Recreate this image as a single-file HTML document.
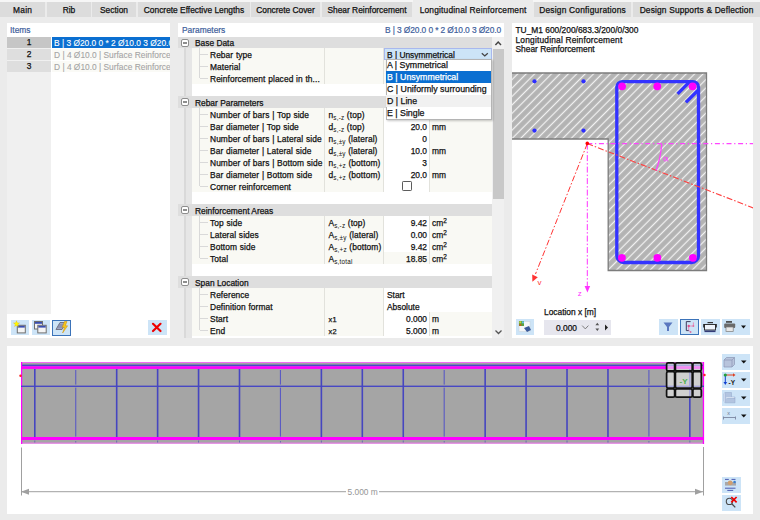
<!DOCTYPE html>
<html><head><meta charset="utf-8">
<style>
*{box-sizing:border-box;margin:0;padding:0}
html,body{width:760px;height:520px;overflow:hidden;background:#ebebeb;font-family:"Liberation Sans",sans-serif;font-size:8.4px;color:#111;-webkit-text-stroke:0.25px currentColor}
div{position:absolute;white-space:nowrap}
.tab{top:2px;height:15px;background:#dcdcdc;text-align:center;line-height:16px;color:#111;-webkit-text-stroke:0.25px currentColor}
.tab.act{top:0;height:18px;background:#ebebeb;line-height:20px}
.pn{background:#fff}
.ttl{color:#40609c;-webkit-text-stroke:0.2px currentColor}
.r{height:12px;line-height:15px}
.hd{background:#dedede}
.bg{background:#f9f9f4}
.wt{background:#fff}
.vl{background:#e2e2dc;width:1px}
sub{font-size:6.3px;vertical-align:0;position:relative;top:1.5px;letter-spacing:0.25px;-webkit-text-stroke:0px}
sup{font-size:6.4px;vertical-align:0;position:relative;top:-3px}
.btn{background:#cde4f7}
</style></head><body>

<div style="left:0;top:0;width:760px;height:2px;background:#f6f6f6"></div>
<div class="tab" style="left:0px;width:45px;letter-spacing:0.2px;text-indent:0.2px">Main</div>
<div class="tab" style="left:47px;width:44px;letter-spacing:0px;text-indent:0px">Rib</div>
<div class="tab" style="left:92px;width:44px;letter-spacing:0px;text-indent:0px">Section</div>
<div class="tab" style="left:138px;width:112px;letter-spacing:0px;text-indent:0px">Concrete Effective Lengths</div>
<div class="tab" style="left:251px;width:69px;letter-spacing:0px;text-indent:0px">Concrete Cover</div>
<div class="tab" style="left:322px;width:90px;letter-spacing:0px;text-indent:0px">Shear Reinforcement</div>
<div class="tab act" style="left:413px;width:120px;letter-spacing:0.19px;text-indent:0.19px">Longitudinal Reinforcement</div>
<div class="tab" style="left:534px;width:97px;letter-spacing:0.21px;text-indent:0.21px">Design Configurations</div>
<div class="tab" style="left:633px;width:127px;letter-spacing:0.16px;text-indent:0.16px">Design Supports &amp; Deflection</div>
<div class="pn" style="left:7px;top:23px;width:163px;height:315px"></div>
<div class="ttl" style="left:10px;top:23px;height:14px;line-height:15px">Items</div>
<div style="left:7px;top:37px;width:44px;height:277px;background:#f0f0f0"></div>
<div class="r" style="left:7px;top:37px;width:44px;height:11px;background:#c6c6c6;text-align:center;line-height:11px">1</div>
<div class="r" style="left:7px;top:49px;width:44px;height:11px;background:#dedede;text-align:center;line-height:11px">2</div>
<div class="r" style="left:7px;top:61px;width:44px;height:11px;background:#dedede;text-align:center;line-height:11px">3</div>
<div class="r" style="left:52px;top:37px;width:118px;height:11px;line-height:12px;background:#0b6fd1;color:#fff;padding-left:2px;overflow:hidden;-webkit-text-stroke:0.1px currentColor">B | 3 Ø20.0 0 * 2 Ø10.0 3 Ø20.0</div>
<div class="r" style="left:52px;top:49px;width:118px;height:11px;line-height:12px;background:#fafaf6;color:#a4a4a4;padding-left:2px;overflow:hidden;-webkit-text-stroke:0.1px currentColor">D | 4 Ø10.0 | Surface Reinforcement</div>
<div class="r" style="left:52px;top:61px;width:118px;height:11px;line-height:12px;background:#fafaf6;color:#a4a4a4;padding-left:2px;overflow:hidden;-webkit-text-stroke:0.1px currentColor">D | 4 Ø10.0 | Surface Reinforcement</div>
<div class="btn" style="left:10.5px;top:320px;width:18.5px;height:15px"></div>
<div class="btn" style="left:31.5px;top:320px;width:18.5px;height:15px"></div>
<div class="btn" style="left:52px;top:320px;width:19px;height:15.5px;border:1.3px solid #3b73b9"></div>
<div class="btn" style="left:148px;top:320px;width:18.5px;height:15px"></div>
<svg style="position:absolute;left:0;top:300px" width="180" height="40" viewBox="0 300 180 40"><rect x="17.3" y="325.3" width="8" height="7.6" fill="#f4f4f4" stroke="#6e6e6e" stroke-width="1"/><rect x="17.8" y="325.8" width="7" height="1.8" fill="#3a4fb0"/><path d="M16.5 320.8 L17.2 323 L19.5 323 L17.7 324.3 L18.4 326.5 L16.5 325.2 L14.6 326.5 L15.3 324.3 L13.5 323 L15.8 323 Z" fill="#f6e81a" stroke="#e0c000" stroke-width="0.4"/><circle cx="16.5" cy="323.8" r="1.6" fill="#fff700"/><rect x="34.5" y="321.5" width="8" height="7.5" fill="#f4f4f4" stroke="#6e6e6e" stroke-width="1"/><rect x="35" y="322" width="7" height="1.8" fill="#3a4fb0"/><rect x="37.8" y="325.3" width="8.4" height="7.6" fill="#f4f4f4" stroke="#6e6e6e" stroke-width="1"/><rect x="38.3" y="325.8" width="7.4" height="1.8" fill="#3a4fb0"/><path d="M56 329.5 L60 322.5 L66 322.5 L62 329.5 Z" fill="#9da6c4" stroke="#6c6c7c" stroke-width="0.9"/><path d="M57.5 327 L63.5 327 M58.8 325 L64.8 325" stroke="#6c6c8c" stroke-width="0.6"/><path d="M64.5 321.5 L62.3 327.2 L64.6 327.2 L62.6 333 L67.6 325.8 L65.3 325.8 L67 321.5 Z" fill="#f7c81e" stroke="#d09000" stroke-width="0.5"/><path d="M153 323.8 L160.5 331 M160.5 323.8 L153 331" stroke="#ee0000" stroke-width="2.2" stroke-linecap="round"/></svg>
<div class="pn" style="left:178px;top:23px;width:326px;height:315px"></div>
<div class="ttl" style="left:182px;top:23px;height:14px;line-height:15px">Parameters</div>
<div class="ttl" style="left:300px;width:201px;text-align:right;letter-spacing:-0.1px;top:23px;height:14px;line-height:15px">B | 3 Ø20.0 0 * 2 Ø10.0 3 Ø20.0</div>
<div style="left:178px;top:37px;width:14px;height:301px;background:#e6e6e6"></div>
<div style="left:178px;top:37px;width:6px;height:301px;background:#ebebeb"></div>
<div style="left:184px;top:37px;width:2px;height:301px;background:#d9d9d9"></div>
<div class="hd" style="left:178px;top:37px;width:314px;height:11px"></div>
<div style="left:181px;top:39px;width:8px;height:8px;border:1px solid #8e8e8e;border-radius:2px;background:#fff"></div>
<div style="left:183px;top:42px;width:4px;height:2px;background:#8e8e8e"></div>
<div class="r" style="left:195px;top:37px;height:11px;line-height:13px">Base Data</div>
<div class="bg" style="left:192px;top:48px;width:300px;height:36px"></div>
<div style="left:199px;top:48px;width:1px;height:30px;background:#d9d9d9"></div>
<div style="left:200px;top:54px;width:8px;height:1px;background:#d9d9d9"></div>
<div class="r" style="left:210px;top:48px;letter-spacing:0.08px;word-spacing:0.3px">Rebar type</div>
<div style="left:200px;top:66px;width:8px;height:1px;background:#d9d9d9"></div>
<div class="r" style="left:210px;top:60px;letter-spacing:0.08px;word-spacing:0.3px">Material</div>
<div style="left:200px;top:78px;width:8px;height:1px;background:#d9d9d9"></div>
<div class="r" style="left:210px;top:72px;letter-spacing:0.08px;word-spacing:0.3px">Reinforcement placed in th...</div>
<div class="vl" style="left:324px;top:48px;height:36px"></div>
<div class="vl" style="left:383px;top:48px;height:36px"></div>
<div class="vl" style="left:429px;top:48px;height:12px"></div>
<div class="vl" style="left:429px;top:60px;height:12px"></div>
<div class="vl" style="left:429px;top:72px;height:12px"></div>
<div class="hd" style="left:178px;top:96px;width:314px;height:12px"></div>
<div style="left:181px;top:98px;width:8px;height:8px;border:1px solid #8e8e8e;border-radius:2px;background:#fff"></div>
<div style="left:183px;top:101px;width:4px;height:2px;background:#8e8e8e"></div>
<div class="r" style="left:195px;top:96px;height:12px;line-height:14px">Rebar Parameters</div>
<div class="bg" style="left:192px;top:108px;width:300px;height:84px"></div>
<div style="left:199px;top:108px;width:1px;height:78px;background:#d9d9d9"></div>
<div style="left:200px;top:114px;width:8px;height:1px;background:#d9d9d9"></div>
<div class="r" style="left:210px;top:108px;letter-spacing:0.08px;word-spacing:0.3px">Number of bars | Top side</div>
<div class="wt" style="left:384px;top:108px;width:45px;height:12px"></div>
<div class="r" style="left:328.5px;top:108px;letter-spacing:0.1px">n<sub>s,-z</sub> (top)</div>
<div style="left:200px;top:126px;width:8px;height:1px;background:#d9d9d9"></div>
<div class="r" style="left:210px;top:120px;letter-spacing:0.08px;word-spacing:0.3px">Bar diameter | Top side</div>
<div class="wt" style="left:384px;top:120px;width:45px;height:12px"></div>
<div class="r" style="left:328.5px;top:120px;letter-spacing:0.1px">d<sub>s,-z</sub> (top)</div>
<div class="r" style="left:384px;width:43px;text-align:right;top:120px">20.0</div>
<div class="r" style="left:432px;top:120px">mm</div>
<div style="left:200px;top:138px;width:8px;height:1px;background:#d9d9d9"></div>
<div class="r" style="left:210px;top:132px;letter-spacing:0.08px;word-spacing:0.3px">Number of bars | Lateral side</div>
<div class="wt" style="left:384px;top:132px;width:45px;height:12px"></div>
<div class="r" style="left:328.5px;top:132px;letter-spacing:0.1px">n<sub>s,±y</sub> (lateral)</div>
<div class="r" style="left:384px;width:43px;text-align:right;top:132px">0</div>
<div style="left:200px;top:150px;width:8px;height:1px;background:#d9d9d9"></div>
<div class="r" style="left:210px;top:144px;letter-spacing:0.08px;word-spacing:0.3px">Bar diameter | Lateral side</div>
<div class="wt" style="left:384px;top:144px;width:45px;height:12px"></div>
<div class="r" style="left:328.5px;top:144px;letter-spacing:0.1px">d<sub>s,±y</sub> (lateral)</div>
<div class="r" style="left:384px;width:43px;text-align:right;top:144px">10.0</div>
<div class="r" style="left:432px;top:144px">mm</div>
<div style="left:200px;top:162px;width:8px;height:1px;background:#d9d9d9"></div>
<div class="r" style="left:210px;top:156px;letter-spacing:0.08px;word-spacing:0.3px">Number of bars | Bottom side</div>
<div class="wt" style="left:384px;top:156px;width:45px;height:12px"></div>
<div class="r" style="left:328.5px;top:156px;letter-spacing:0.1px">n<sub>s,+z</sub> (bottom)</div>
<div class="r" style="left:384px;width:43px;text-align:right;top:156px">3</div>
<div style="left:200px;top:174px;width:8px;height:1px;background:#d9d9d9"></div>
<div class="r" style="left:210px;top:168px;letter-spacing:0.08px;word-spacing:0.3px">Bar diameter | Bottom side</div>
<div class="wt" style="left:384px;top:168px;width:45px;height:12px"></div>
<div class="r" style="left:328.5px;top:168px;letter-spacing:0.1px">d<sub>s,+z</sub> (bottom)</div>
<div class="r" style="left:384px;width:43px;text-align:right;top:168px">20.0</div>
<div class="r" style="left:432px;top:168px">mm</div>
<div style="left:200px;top:186px;width:8px;height:1px;background:#d9d9d9"></div>
<div class="r" style="left:210px;top:180px;letter-spacing:0.08px;word-spacing:0.3px">Corner reinforcement</div>
<div class="wt" style="left:384px;top:180px;width:45px;height:12px"></div>
<div style="left:402px;top:181px;width:10px;height:10px;border:1px solid #5c5c5c;border-radius:1.2px;background:#fff"></div>
<div class="vl" style="left:324px;top:108px;height:84px"></div>
<div class="vl" style="left:383px;top:108px;height:84px"></div>
<div class="vl" style="left:429px;top:108px;height:12px"></div>
<div class="vl" style="left:429px;top:120px;height:12px"></div>
<div class="vl" style="left:429px;top:132px;height:12px"></div>
<div class="vl" style="left:429px;top:144px;height:12px"></div>
<div class="vl" style="left:429px;top:156px;height:12px"></div>
<div class="vl" style="left:429px;top:168px;height:12px"></div>
<div class="vl" style="left:429px;top:180px;height:12px"></div>
<div class="hd" style="left:178px;top:204px;width:314px;height:12px"></div>
<div style="left:181px;top:206px;width:8px;height:8px;border:1px solid #8e8e8e;border-radius:2px;background:#fff"></div>
<div style="left:183px;top:209px;width:4px;height:2px;background:#8e8e8e"></div>
<div class="r" style="left:195px;top:204px;height:12px;line-height:14px">Reinforcement Areas</div>
<div class="bg" style="left:192px;top:216px;width:300px;height:48px"></div>
<div style="left:199px;top:216px;width:1px;height:42px;background:#d9d9d9"></div>
<div style="left:200px;top:222px;width:8px;height:1px;background:#d9d9d9"></div>
<div class="r" style="left:210px;top:216px;letter-spacing:0.08px;word-spacing:0.3px">Top side</div>
<div class="wt" style="left:384px;top:216px;width:45px;height:12px"></div>
<div class="r" style="left:328.5px;top:216px;letter-spacing:0.1px">A<sub>s,-z</sub> (top)</div>
<div class="r" style="left:384px;width:43px;text-align:right;top:216px">9.42</div>
<div class="r" style="left:432px;top:216px">cm<sup>2</sup></div>
<div style="left:200px;top:234px;width:8px;height:1px;background:#d9d9d9"></div>
<div class="r" style="left:210px;top:228px;letter-spacing:0.08px;word-spacing:0.3px">Lateral sides</div>
<div class="wt" style="left:384px;top:228px;width:45px;height:12px"></div>
<div class="r" style="left:328.5px;top:228px;letter-spacing:0.1px">A<sub>s,±y</sub> (lateral)</div>
<div class="r" style="left:384px;width:43px;text-align:right;top:228px">0.00</div>
<div class="r" style="left:432px;top:228px">cm<sup>2</sup></div>
<div style="left:200px;top:246px;width:8px;height:1px;background:#d9d9d9"></div>
<div class="r" style="left:210px;top:240px;letter-spacing:0.08px;word-spacing:0.3px">Bottom side</div>
<div class="wt" style="left:384px;top:240px;width:45px;height:12px"></div>
<div class="r" style="left:328.5px;top:240px;letter-spacing:0.1px">A<sub>s,+z</sub> (bottom)</div>
<div class="r" style="left:384px;width:43px;text-align:right;top:240px">9.42</div>
<div class="r" style="left:432px;top:240px">cm<sup>2</sup></div>
<div style="left:200px;top:258px;width:8px;height:1px;background:#d9d9d9"></div>
<div class="r" style="left:210px;top:252px;letter-spacing:0.08px;word-spacing:0.3px">Total</div>
<div class="r" style="left:328.5px;top:252px;letter-spacing:0.1px">A<sub>s,total</sub></div>
<div class="r" style="left:384px;width:43px;text-align:right;top:252px">18.85</div>
<div class="r" style="left:432px;top:252px">cm<sup>2</sup></div>
<div class="vl" style="left:324px;top:216px;height:48px"></div>
<div class="vl" style="left:383px;top:216px;height:48px"></div>
<div class="vl" style="left:429px;top:216px;height:12px"></div>
<div class="vl" style="left:429px;top:228px;height:12px"></div>
<div class="vl" style="left:429px;top:240px;height:12px"></div>
<div class="vl" style="left:429px;top:252px;height:12px"></div>
<div class="hd" style="left:178px;top:276px;width:314px;height:12px"></div>
<div style="left:181px;top:278px;width:8px;height:8px;border:1px solid #8e8e8e;border-radius:2px;background:#fff"></div>
<div style="left:183px;top:281px;width:4px;height:2px;background:#8e8e8e"></div>
<div class="r" style="left:195px;top:276px;height:12px;line-height:14px">Span Location</div>
<div class="bg" style="left:192px;top:288px;width:300px;height:48px"></div>
<div style="left:199px;top:288px;width:1px;height:42px;background:#d9d9d9"></div>
<div style="left:200px;top:294px;width:8px;height:1px;background:#d9d9d9"></div>
<div class="r" style="left:210px;top:288px;letter-spacing:0.08px;word-spacing:0.3px">Reference</div>
<div class="wt" style="left:384px;top:288px;width:108px;height:12px"></div>
<div class="r" style="left:387px;top:288px">Start</div>
<div style="left:200px;top:306px;width:8px;height:1px;background:#d9d9d9"></div>
<div class="r" style="left:210px;top:300px;letter-spacing:0.08px;word-spacing:0.3px">Definition format</div>
<div class="wt" style="left:384px;top:300px;width:108px;height:12px"></div>
<div class="r" style="left:387px;top:300px">Absolute</div>
<div style="left:200px;top:318px;width:8px;height:1px;background:#d9d9d9"></div>
<div class="r" style="left:210px;top:312px;letter-spacing:0.08px;word-spacing:0.3px">Start</div>
<div class="wt" style="left:384px;top:312px;width:45px;height:12px"></div>
<div class="r" style="left:328.5px;top:312px;letter-spacing:0.1px"><span style="font-size:7.4px;letter-spacing:0.3px">x1</span></div>
<div class="r" style="left:384px;width:43px;text-align:right;top:312px">0.000</div>
<div class="r" style="left:432px;top:312px">m</div>
<div style="left:200px;top:330px;width:8px;height:1px;background:#d9d9d9"></div>
<div class="r" style="left:210px;top:324px;letter-spacing:0.08px;word-spacing:0.3px">End</div>
<div class="wt" style="left:384px;top:324px;width:45px;height:12px"></div>
<div class="r" style="left:328.5px;top:324px;letter-spacing:0.1px"><span style="font-size:7.4px;letter-spacing:0.3px">x2</span></div>
<div class="r" style="left:384px;width:43px;text-align:right;top:324px">5.000</div>
<div class="r" style="left:432px;top:324px">m</div>
<div class="vl" style="left:324px;top:288px;height:48px"></div>
<div class="vl" style="left:383px;top:288px;height:48px"></div>
<div class="vl" style="left:429px;top:312px;height:12px"></div>
<div class="vl" style="left:429px;top:324px;height:12px"></div>
<div style="left:492.4px;top:37px;width:11.6px;height:301px;background:#f0f0f0"></div>
<div style="left:492.8px;top:49.3px;width:10.8px;height:149.5px;background:#c8c8c8"></div>
<svg style="position:absolute;left:493px;top:38px" width="11" height="10"><path d="M2.4 7 L5.2 4.1 L8 7" fill="none" stroke="#444" stroke-width="1.5"/></svg>
<svg style="position:absolute;left:493px;top:327px" width="11" height="10"><path d="M2.5 3.5 L5.5 6.5 L8.5 3.5" fill="none" stroke="#555" stroke-width="1.3"/></svg>
<div style="left:384px;top:48px;width:108px;height:12px;background:#cce4f7;border:1px solid #a8b8ee"></div>
<div class="r" style="left:387px;top:48px">B | Unsymmetrical</div>
<svg style="position:absolute;left:480px;top:50px" width="10" height="8"><path d="M1.8 3.2 L4.8 5.9 L7.8 3.2" fill="none" stroke="#444" stroke-width="1.3"/></svg>
<div style="left:385.5px;top:59px;width:106px;height:61px;background:#fff;border:1px solid #b4b4b4;box-shadow:1px 1px 2px rgba(0,0,0,0.22)"></div>
<div class="r" style="left:387px;top:59.3px;font-size:8.8px;line-height:13.5px">A | Symmetrical</div>
<div style="left:386px;top:71.3px;width:105px;height:12px;background:#0b6fd1"></div>
<div class="r" style="left:387px;top:71.3px;color:#fff;font-size:8.8px;line-height:13.5px">B | Unsymmetrical</div>
<div class="r" style="left:387px;top:83.3px;font-size:8.8px;line-height:13.5px">C | Uniformly surrounding</div>
<div style="left:386px;top:95.3px;width:105px;height:12px;background:#f1f1f1"></div>
<div class="r" style="left:387px;top:95.3px;font-size:8.8px;line-height:13.5px">D | Line</div>
<div class="r" style="left:387px;top:107.3px;font-size:8.8px;line-height:13.5px">E | Single</div>
<div class="pn" style="left:512px;top:23px;width:241px;height:315px"></div>
<div style="left:515.5px;top:25.8px;line-height:9.8px">TU_M1 600/200/683.3/200/0/300</div>
<div style="left:515.5px;top:35.6px;line-height:9.8px;letter-spacing:0.19px">Longitudinal Reinforcement</div>
<div style="left:515.5px;top:45.4px;line-height:9.8px">Shear Reinforcement</div>
<svg style="position:absolute;left:512px;top:23px" width="241" height="315" viewBox="512 23 241 315"><defs><pattern id="h" patternUnits="userSpaceOnUse" width="5.9556" height="20" patternTransform="rotate(45)"><rect x="0" y="0" width="5.9556" height="20" fill="#b3b3b3"/><rect x="0.845" y="0" width="1.25" height="20" fill="#f2f2f2"/></pattern></defs><path d="M500 73 H706.5 V270.5 H608.2 V139 H500 Z" fill="url(#h)" stroke="#7c7c7c" stroke-width="1.3"/><circle cx="534.5" cy="81.3" r="2.1" fill="#2d2dff"/><circle cx="583.5" cy="81.3" r="2.1" fill="#2d2dff"/><circle cx="534.5" cy="130.6" r="2.1" fill="#2d2dff"/><circle cx="583.5" cy="130.6" r="2.1" fill="#2d2dff"/><path d="M616.8 87.3 A5.7 5.7 0 0 1 622.5 81.6 H692.8 A5.7 5.7 0 0 1 698.5 87.3 V255.5 A7 7 0 0 1 691.5 262.5 H623.8 A7 7 0 0 1 616.8 255.5 Z" fill="none" stroke="#3333ff" stroke-width="3.3"/><path d="M677.6 93.8 L689.5 81.9 M685.9 102.4 L697.8 90.5" stroke="#3333ff" stroke-width="3.3" fill="none"/><circle cx="622.1" cy="86.3" r="3.9" fill="#ff00ff"/><circle cx="657.3" cy="86.3" r="3.9" fill="#ff00ff"/><circle cx="692.6" cy="86.3" r="3.9" fill="#ff00ff"/><circle cx="621.9" cy="257.8" r="3.9" fill="#ff00ff"/><circle cx="657.4" cy="257.8" r="3.9" fill="#ff00ff"/><circle cx="692.9" cy="257.8" r="3.9" fill="#ff00ff"/><path d="M587.3 143.6 H753" stroke="#ff44ff" stroke-width="1.1" stroke-dasharray="5 2.7 1.2 2.7" fill="none"/><path d="M587.3 143.6 V287" stroke="#ff33ff" stroke-width="1" stroke-dasharray="6 2 1.5 2" fill="none"/><path d="M584.6 286 L590.2 286 L587.4 292.5 Z" fill="#ff33ff"/><path d="M587.3 143.6 L753.5 208" stroke="#ff4040" stroke-width="1.1" stroke-dasharray="6 2 1.5 2" fill="none"/><path d="M587.3 143.6 L535.5 274" stroke="#ff3333" stroke-width="1" stroke-dasharray="6 2 1.5 2" fill="none"/><path d="M532.2 274.6 L537.8 277.2 L532.4 281.8 Z" fill="#ff3333"/><circle cx="587.3" cy="143.4" r="1.8" fill="#ff0000"/><path d="M661.8 144 Q660.5 158 656.1 170.5" stroke="#ff44ff" stroke-width="1.3" fill="none"/><path d="M667.4 157 Q666.8 161.3 665.1 161.2 Q663.5 161 663.6 159.1 Q663.8 157 665.3 157 Q666.8 157.1 667.1 159.6 Q667.3 161.1 668.3 161.4" fill="none" stroke="#ff44ff" stroke-width="0.9"/><text x="537.6" y="284.8" font-size="8" fill="#ff3333" font-family="Liberation Sans">v</text><text x="577.8" y="295.5" font-size="8" fill="#ff33ff" font-family="Liberation Sans">z</text></svg>
<div class="r" style="left:544px;top:305.5px;line-height:13px">Location x [m]</div>
<div style="left:544px;top:320px;width:67px;height:15px;background:#e6e6ee"></div>
<div class="r" style="left:556px;top:321px;line-height:14px">0.000</div>
<svg style="position:absolute;left:544px;top:320px" width="67" height="15"><path d="M38.2 5.6 L41.3 8.9 L44.4 5.6" fill="none" stroke="#707070" stroke-width="0.9"/><path d="M51.4 5.2 L53.3 2.7 L55.2 5.2 Z M51.4 8.6 L55.2 8.6 L53.3 11.1 Z" fill="#555"/><path d="M61 4.5 L64 7.5 L61 10.5 Z" fill="#222"/></svg>
<div class="btn" style="left:516px;top:319px;width:18px;height:15.5px"></div>
<div class="btn" style="left:659px;top:319px;width:19px;height:16px"></div>
<div class="btn" style="left:680px;top:319px;width:19px;height:16px;border:1.3px solid #3b73b9"></div>
<div class="btn" style="left:701px;top:319px;width:19px;height:16px"></div>
<div class="btn" style="left:722px;top:319px;width:28px;height:16px"></div>
<svg style="position:absolute;left:500px;top:300px" width="260" height="40" viewBox="500 300 260 40"><rect x="519" y="321.5" width="11" height="10" fill="#f4f6f8" stroke="#c8d0d8" stroke-width="0.5"/><rect x="519" y="321" width="5" height="5" fill="#5aa040"/><rect x="519.3" y="321.3" width="2" height="2" fill="#c8d040"/><rect x="522" y="321.3" width="2" height="2" fill="#60c0e0"/><rect x="519.3" y="324" width="2" height="2" fill="#c06020"/><path d="M524 328 L529 326 L531 330 L527 332 Z" fill="#3a5a9a"/><path d="M663.5 322.5 L672.5 322.5 L669 327 L669 331 L667 331 L667 327 Z" fill="#5a78c0"/><path d="M690.6 321.6 H686.3 V330.6 H689" fill="none" stroke="#3c3c5c" stroke-width="1"/><path d="M688.7 326 H693.4 V322.4 M688.7 326 V330.4 L690.6 332" fill="none" stroke="#e87ab0" stroke-width="0.8"/><circle cx="688.7" cy="326" r="1.2" fill="#e0508a"/><circle cx="693.4" cy="326" r="0.9" fill="#e070a0"/><circle cx="690.6" cy="332" r="0.9" fill="#e070a0"/><rect x="704.5" y="324.5" width="11" height="5.5" fill="#eef4fb" stroke="#222" stroke-width="0.9"/><rect x="704.5" y="330.5" width="11" height="1.6" fill="#343c78"/><path d="M707.5 322.6 H713" stroke="#333" stroke-width="1.2"/><path d="M703.8 324 V327.5 M716.2 324 V327.5" stroke="#222" stroke-width="1.2"/><rect x="726" y="321" width="6" height="1.8" fill="#505050"/><rect x="724.2" y="323.5" width="11" height="4.6" rx="1" fill="#6a6a6a"/><rect x="726" y="327" width="7.2" height="4.6" fill="#e8e8e8" stroke="#7a7a7a" stroke-width="0.7"/><path d="M741 325.6 L746 325.6 L743.5 328.6 Z" fill="#111"/></svg>
<div class="pn" style="left:7px;top:346px;width:746px;height:168px"></div>
<svg style="position:absolute;left:0;top:0" width="760" height="520"><rect x="21" y="362.5" width="682.5" height="81" fill="#a5a5a5"/><rect x="21" y="362" width="683" height="1" fill="#f070f0"/><rect x="21" y="364.6" width="683" height="1.6" fill="#4848c8"/><rect x="21" y="366.3" width="683" height="2.6" fill="#ff00ff"/><rect x="21" y="437" width="683" height="3" fill="#ff00ff"/><rect x="21" y="442.6" width="683" height="1" fill="#f070f0"/><rect x="21" y="362" width="1.2" height="82" fill="#ff00ff"/><rect x="702.8" y="362" width="1.3" height="82" fill="#ff00ff"/><rect x="21" y="385.6" width="683" height="1.4" fill="#4848c4"/><rect x="34.00" y="369" width="1.6" height="68" fill="#4646c0"/><rect x="34.30" y="440.5" width="1" height="2" fill="#6a6ab0"/><rect x="75.19" y="370" width="1.1" height="14.6" fill="#5a5ac4"/><rect x="75.19" y="387.6" width="1.1" height="49" fill="#5a5ac4"/><rect x="75.24" y="441" width="1" height="1.5" fill="#6a6ab0"/><rect x="115.88" y="369" width="1.6" height="68" fill="#4646c0"/><rect x="116.18" y="440.5" width="1" height="2" fill="#6a6ab0"/><rect x="156.82" y="369" width="1.6" height="68" fill="#4646c0"/><rect x="157.12" y="440.5" width="1" height="2" fill="#6a6ab0"/><rect x="197.76" y="369" width="1.6" height="68" fill="#4646c0"/><rect x="198.06" y="440.5" width="1" height="2" fill="#6a6ab0"/><rect x="238.70" y="369" width="1.6" height="68" fill="#4646c0"/><rect x="239.00" y="440.5" width="1" height="2" fill="#6a6ab0"/><rect x="279.89" y="370" width="1.1" height="14.6" fill="#5a5ac4"/><rect x="279.89" y="387.6" width="1.1" height="49" fill="#5a5ac4"/><rect x="279.94" y="441" width="1" height="1.5" fill="#6a6ab0"/><rect x="320.58" y="369" width="1.6" height="68" fill="#4646c0"/><rect x="320.88" y="440.5" width="1" height="2" fill="#6a6ab0"/><rect x="361.52" y="369" width="1.6" height="68" fill="#4646c0"/><rect x="361.82" y="440.5" width="1" height="2" fill="#6a6ab0"/><rect x="402.46" y="369" width="1.6" height="68" fill="#4646c0"/><rect x="402.76" y="440.5" width="1" height="2" fill="#6a6ab0"/><rect x="443.65" y="370" width="1.1" height="14.6" fill="#5a5ac4"/><rect x="443.65" y="387.6" width="1.1" height="49" fill="#5a5ac4"/><rect x="443.70" y="441" width="1" height="1.5" fill="#6a6ab0"/><rect x="484.34" y="369" width="1.6" height="68" fill="#4646c0"/><rect x="484.64" y="440.5" width="1" height="2" fill="#6a6ab0"/><rect x="525.28" y="369" width="1.6" height="68" fill="#4646c0"/><rect x="525.58" y="440.5" width="1" height="2" fill="#6a6ab0"/><rect x="566.22" y="369" width="1.6" height="68" fill="#4646c0"/><rect x="566.52" y="440.5" width="1" height="2" fill="#6a6ab0"/><rect x="607.16" y="369" width="1.6" height="68" fill="#4646c0"/><rect x="607.46" y="440.5" width="1" height="2" fill="#6a6ab0"/><rect x="648.35" y="370" width="1.1" height="14.6" fill="#5a5ac4"/><rect x="648.35" y="387.6" width="1.1" height="49" fill="#5a5ac4"/><rect x="648.40" y="441" width="1" height="1.5" fill="#6a6ab0"/><rect x="689.04" y="369" width="1.6" height="68" fill="#4646c0"/><rect x="689.34" y="440.5" width="1" height="2" fill="#6a6ab0"/><circle cx="20.5" cy="375.7" r="1.2" fill="#ff2020"/><circle cx="704.5" cy="375" r="1.2" fill="#ff2020"/><rect x="21" y="447.5" width="1" height="48" fill="#a0a0a0"/><rect x="703" y="447" width="1" height="48.5" fill="#a0a0a0"/><rect x="21" y="491.2" width="325" height="1" fill="#a0a0a0"/><rect x="379" y="491.2" width="324" height="1" fill="#a0a0a0"/><path d="M21 491.7 L29 488.7 L29 494.7 Z" fill="#a0a0a0"/><path d="M703 491.7 L695 488.7 L695 494.7 Z" fill="#a0a0a0"/><text x="347.5" y="494.8" font-size="8.4" fill="#959595" font-family="Liberation Sans">5.000 m</text><g fill="rgba(238,238,238,0.58)" stroke="#111" stroke-width="1.7"><rect x="666.6" y="362.9" width="8.0" height="8.0" rx="1.5"/><rect x="666.6" y="371.7" width="8.0" height="16.4" rx="1.5"/><rect x="666.6" y="388.9" width="8.0" height="8.3" rx="1.5"/><rect x="675.4" y="362.9" width="16.8" height="8.0" rx="1.5"/><rect x="675.4" y="371.7" width="16.8" height="16.4" rx="1.5"/><rect x="675.4" y="388.9" width="16.8" height="8.3" rx="1.5"/><rect x="692.9" y="362.9" width="8.4" height="8.0" rx="1.5"/><rect x="692.9" y="371.7" width="8.4" height="16.4" rx="1.5"/><rect x="692.9" y="388.9" width="8.4" height="8.3" rx="1.5"/></g><text x="679.6" y="384" font-size="8" fill="#4cb04c" font-family="Liberation Sans" font-weight="bold">-Y</text></svg>
<div class="btn" style="left:722px;top:354px;width:27.5px;height:15.5px"></div>
<div class="btn" style="left:722px;top:372px;width:27.5px;height:15.5px"></div>
<div class="btn" style="left:722px;top:390px;width:27.5px;height:15.5px"></div>
<div class="btn" style="left:722px;top:408px;width:27.5px;height:15.5px"></div>
<div class="btn" style="left:722px;top:477px;width:18.8px;height:15.8px"></div>
<div class="btn" style="left:722px;top:495px;width:18.8px;height:15.8px"></div>
<svg style="position:absolute;left:700px;top:345px" width="60" height="175" viewBox="700 345 60 175"><path d="M741 360.4 L746.5 360.4 L743.75 363.4 Z" fill="#111"/><path d="M741 378.4 L746.5 378.4 L743.75 381.4 Z" fill="#111"/><path d="M741 396.4 L746.5 396.4 L743.75 399.4 Z" fill="#111"/><path d="M741 414.4 L746.5 414.4 L743.75 417.4 Z" fill="#111"/><path d="M724 360 L726.5 357.5 L734.5 357.5 L734.5 364.5 L732 367 L724 367 Z" fill="#b8c4dc" stroke="#8a96b4" stroke-width="0.7"/><path d="M724 360 L732 360 L734.5 357.5 M732 360 L732 367" fill="none" stroke="#8a96b4" stroke-width="0.7"/><path d="M725.3 375 H733.5" stroke="#e04020" stroke-width="1"/><path d="M733 373.2 L735.5 375 L733 376.8 Z" fill="#e04020"/><path d="M725.3 375 V382.5" stroke="#1040d0" stroke-width="1"/><path d="M723.5 382 L727.1 382 L725.3 385 Z" fill="#1040d0"/><circle cx="725.3" cy="375" r="1.6" fill="#20a040"/><text x="728.5" y="384.5" font-size="6.5" font-weight="bold" fill="#222" font-family="Liberation Sans">-Y</text><path d="M723.5 394 L725.2 392.5 L731.5 392.5 L731.5 397 L735 397 L735 402.8 L725.5 402.8 L723.5 401 Z" fill="#b2c4e0" stroke="#90a6c8" stroke-width="0.5"/><path d="M723.5 394 L725.2 392.5 L725.2 402.8 L723.5 401 Z" fill="#d4e2f4"/><path d="M725.2 398.2 L727 397 L735 397 L733.4 398.2 Z" fill="#dce6f4"/><path d="M727.2 398.3 H735 M725.2 392.5 V402.8" stroke="#8ea4c8" stroke-width="0.5"/><path d="M723.5 416.5 V419.5 M735.5 416.5 V419.5 M723.5 417.5 H735.5" stroke="#7a86a0" stroke-width="0.9" fill="none"/><text x="727.2" y="415" font-size="5.5" fill="#6a7690" font-family="Liberation Sans">x</text><path d="M725 479.4 H728.8 M731.5 479.4 H735.5 M725 488.2 H735.5 M727.3 490.4 H733.2" stroke="#3a4aa8" stroke-width="0.9"/><rect x="725" y="482" width="11" height="3.6" fill="#a8a8a8"/><circle cx="730.2" cy="482.8" r="2.4" fill="#d0a070"/><circle cx="734.6" cy="482" r="1.3" fill="#3a80d0"/><circle cx="729.4" cy="501.4" r="3.1" fill="none" stroke="#4a4a4a" stroke-width="1.1"/><path d="M731.8 503.8 L735.3 507.4" stroke="#4a4a4a" stroke-width="1.3"/><path d="M731.3 497 L736.6 502.3 M736.6 497 L731.3 502.3" stroke="#ee0000" stroke-width="1.7"/></svg>
</body></html>
